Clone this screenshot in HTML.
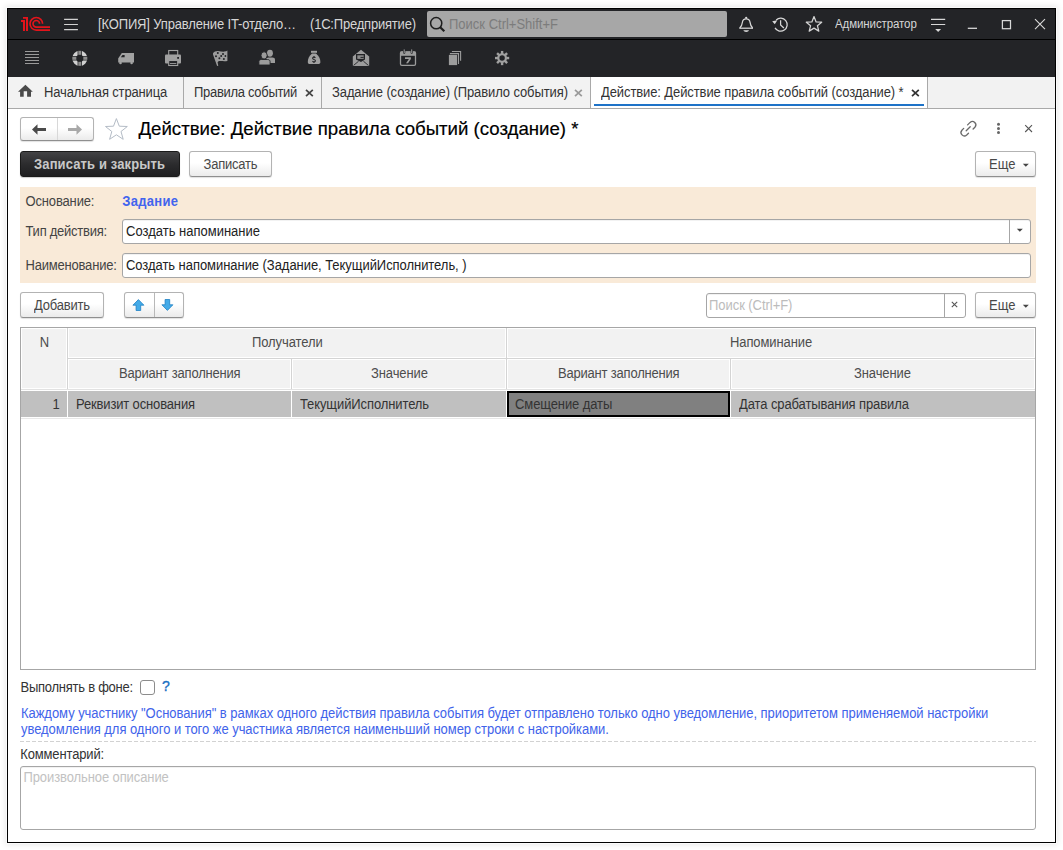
<!DOCTYPE html>
<html><head><meta charset="utf-8">
<style>
*{margin:0;padding:0;box-sizing:border-box}
html,body{width:1063px;height:850px;overflow:hidden;background:#fff;font-family:"Liberation Sans",sans-serif;font-size:13px;color:#333}
.a{position:absolute}
.t{position:absolute;white-space:nowrap;line-height:15px;transform:scaleY(1.07);transform-origin:0 12px}
#win{position:absolute;left:7px;top:8px;width:1049px;height:835px;border:1px solid #000;background:#fff;box-shadow:0 0 0 1px #fafafa,0 0 6px 2px rgba(0,0,0,.09)}
.btn{position:absolute;border:1px solid #b3b3b3;border-bottom-color:#8f8f8f;border-radius:3px;background:linear-gradient(#fff 0%,#fff 45%,#ebebeb 100%);box-shadow:0 1px 1px rgba(0,0,0,.12)}
.hc{background:#f2f2f2;box-shadow:inset 0 0 0 1px #fff}
.inp{position:absolute;border:1px solid #a6a6a6;border-radius:3px;background:#fff;box-shadow:inset 0 1px 0 rgba(0,0,0,.05)}
</style></head><body>
<div id="win"></div>

<!-- title bar -->
<div class="a" style="left:8px;top:9px;width:1047px;height:30px;background:#232427"></div>
<div class="a" style="left:8px;top:39px;width:1047px;height:1px;background:#000"></div>
<!-- toolbar -->
<div class="a" style="left:8px;top:40px;width:1047px;height:37px;background:#232427"></div>

<!-- 1C logo -->
<svg class="a" style="left:18px;top:14px" width="36" height="20" viewBox="18 14 36 20">
  <g fill="#e3141b">
    <rect x="21" y="20" width="4" height="2"/>
    <rect x="23" y="20" width="2" height="11"/>
    <rect x="23" y="17" width="5" height="1.8"/>
    <rect x="26" y="17" width="2" height="14"/>
  </g>
  <g fill="none" stroke="#e3141b" stroke-width="1.65">
    <path d="M42.6,23.8 A6.3,6.3 0 1 0 36.3,30.1 H50"/>
    <path d="M39.6,23.8 A3.3,3.3 0 1 0 36.3,27.1 H50"/>
  </g>
</svg>
<!-- hamburger -->
<svg class="a" style="left:64px;top:18px" width="15" height="13" viewBox="0 0 15 13">
  <g stroke="#d2d2d2" stroke-width="1.2"><path d="M0.1,1.4H13.9M0.1,6.5H13.9M0.1,11.6H13.9"/></g>
</svg>
<div class="t" style="left:98px;top:16.5px;color:#d6d6d6;letter-spacing:-0.15px">[КОПИЯ] Управление IT-отдело…</div>
<div class="t" style="left:310px;top:16.5px;color:#d6d6d6;letter-spacing:-0.2px">(1С:Предприятие)</div>
<!-- search -->
<div class="a" style="left:427px;top:11px;width:300px;height:26px;background:#a7a7a7;border-radius:2px"></div>
<svg class="a" style="left:428px;top:15px" width="20" height="19" viewBox="0 0 20 19">
  <circle cx="8.2" cy="8.2" r="5.6" fill="none" stroke="#1e1e1e" stroke-width="1.5"/>
  <path d="M12.2,12.2 L16.3,16.3" stroke="#1e1e1e" stroke-width="2.2"/>
</svg>
<div class="t" style="left:449px;top:16.5px;color:#7c7c7c">Поиск Ctrl+Shift+F</div>


<!-- toolbar icons -->
<svg class="a" style="left:8px;top:40px" width="520" height="37" viewBox="8 40 520 37">
  <g stroke="#9a9a9a" stroke-width="1"><path d="M25,51.5H39M25,54.5H39M25,57.5H39M25,60.5H39M25,63.5H39"/></g>
  <!-- lifebuoy -->
  <circle cx="79.8" cy="58.3" r="5.6" fill="none" stroke="#d0d0d0" stroke-width="4"/>
  <g fill="#232427"><rect x="77.6" y="50" width="4.4" height="16.6"/><rect x="71.5" y="56.1" width="16.6" height="4.4"/></g>
  <g fill="#8e8e8e"><rect x="78.3" y="50.8" width="3" height="4"/><rect x="78.3" y="61.8" width="3" height="4"/><rect x="72.3" y="56.8" width="4" height="3"/><rect x="83.3" y="56.8" width="4" height="3"/></g>
  <!-- truck -->
  <path d="M121.8,53 H134 V62.6 H118.2 V58.6 Z" fill="#a2a2a2"/>
  <path d="M122.5,55 H124.6 V57.2 H120.8 Z" fill="#232427"/>
  <circle cx="120.5" cy="63" r="1.3" fill="#a2a2a2"/><circle cx="131.6" cy="63" r="1.3" fill="#a2a2a2"/>
  <!-- printer -->
  <rect x="168.7" y="50.5" width="9" height="5" fill="none" stroke="#a0a0a0" stroke-width="1.1"/>
  <rect x="165" y="54.5" width="16" height="9" rx="1" fill="#a0a0a0"/>
  <rect x="168.7" y="60.5" width="9" height="5" fill="#232427" stroke="#a0a0a0" stroke-width="1.1"/>
  <rect x="170" y="63" width="6.3" height="0.9" fill="#a0a0a0"/>
  <rect x="177.2" y="57" width="1.8" height="1.8" fill="#232427"/>
  <!-- flag -->
  <path d="M213,53.2 C214,51.6 216,50.9 218,51 C220.5,51.2 222.5,51.8 224.5,51.6 C225.7,51.5 226.6,51 227.4,50.4 V60.9 C225.5,61.3 223.5,61.2 221.5,61.1 C220,61 219,61.1 218.1,61.5 L217.6,62.3 L218.3,65.7 L217.1,65.9 L213,54.5 Z" fill="#9c9c9c"/>
  <g fill="#232427"><circle cx="217.8" cy="53.1" r="1"/><circle cx="223" cy="53.9" r="1"/><circle cx="216" cy="56.2" r="1"/><circle cx="221.2" cy="55.9" r="1"/><circle cx="225.4" cy="56" r="0.9"/><circle cx="219.4" cy="58.3" r="1"/><circle cx="223.9" cy="59" r="1"/></g>
  <!-- people -->
  <ellipse cx="269.95" cy="53.25" rx="2.95" ry="3.4" fill="#9c9c9c"/>
  <path d="M266,63 V59.6 C266,58.3 267,57.6 268.5,57.6 H272.5 C274,57.6 275,58.3 275,59.6 V63 Z" fill="#9c9c9c"/>
  <ellipse cx="264.1" cy="55.4" rx="3.1" ry="3.6" fill="#9c9c9c" stroke="#232427" stroke-width="0.9"/>
  <path d="M258.9,65 V61.6 C258.9,60.3 260,59.5 261.5,59.5 H267.5 C269,59.5 270.1,60.3 270.1,61.6 V65 Z" fill="#9c9c9c" stroke="#232427" stroke-width="0.9"/>
  <!-- money bag -->
  <rect x="311" y="50.8" width="6" height="2" fill="#a0a0a0"/>
  <path d="M312,53.6 H316 C319,56 320.4,59 320.4,62 C320.4,63.5 319.5,64 318,64 H310 C308.5,64 307.8,63.5 307.8,62 C307.8,59 309,56 312,53.6 Z" fill="#a0a0a0"/>
  <path d="M315.3,57.9 C315,57.3 314.6,57.1 314,57.1 C313.1,57.1 312.6,57.6 312.6,58.3 C312.6,59.1 313.3,59.35 314,59.55 C314.8,59.75 315.4,60.05 315.4,60.85 C315.4,61.5 314.9,61.9 314,61.9 C313.3,61.9 312.8,61.6 312.5,61.1 M314,56 V57.2 M314,61.8 V63" fill="none" stroke="#232427" stroke-width="1.1"/>
  <!-- envelope -->
  <path d="M352.8,56.5 L361,49.7 L369.2,56.5 V65.2 C369.2,65.8 368.8,66.1 368.2,66.1 H353.8 C353.2,66.1 352.8,65.8 352.8,65.2 Z" fill="#9c9c9c"/>
  <path d="M356,54 H365 V59.6 L361,62 L356,59.6 Z" fill="#232427"/>
  <rect x="357.3" y="55.3" width="6.4" height="3.6" fill="#8c8c8c"/>
  <rect x="360.5" y="56.9" width="3.2" height="1" fill="#232427"/>
  <path d="M353.6,65.4 L358.6,61.2 M368.4,65.4 L363.4,61.2" fill="none" stroke="#232427" stroke-width="0.9"/>
  <!-- calendar -->
  <rect x="400.5" y="51.8" width="15" height="13.5" rx="1.3" fill="none" stroke="#9c9c9c" stroke-width="1.3"/>
  <rect x="400.5" y="51.5" width="15" height="4.3" fill="#9c9c9c"/>
  <rect x="403.1" y="49.6" width="2.2" height="4.2" rx="1" fill="#232427"/><rect x="410.6" y="49.6" width="2.2" height="4.2" rx="1" fill="#232427"/>
  <rect x="403.7" y="49.4" width="1" height="3.6" fill="#9c9c9c"/><rect x="411.2" y="49.4" width="1" height="3.6" fill="#9c9c9c"/>
  <path d="M405,57.3 H410.9 V58.9 L408,63.2 H406 L408.9,59 H405 Z" fill="#9c9c9c"/>
  <!-- docs -->
  <path d="M451.9,51.5 H460.6 V60.8" fill="none" stroke="#9c9c9c" stroke-width="1.1"/>
  <path d="M449.9,53.6 H458.5 V63.9" fill="none" stroke="#9c9c9c" stroke-width="1.1"/>
  <rect x="448.9" y="54.9" width="8.2" height="10.2" fill="#9c9c9c"/>
  <!-- gear -->
  <g transform="translate(502.1,58.05)" fill="#a0a0a0">
    <circle r="4.9"/>
    <g id="teeth"><rect x="-1.2" y="-7.1" width="2.4" height="3"/><rect x="-1.2" y="4.1" width="2.4" height="3"/><rect x="-7.1" y="-1.2" width="3" height="2.4"/><rect x="4.1" y="-1.2" width="3" height="2.4"/></g>
    <g transform="rotate(45)"><rect x="-1.2" y="-7.1" width="2.4" height="3"/><rect x="-1.2" y="4.1" width="2.4" height="3"/><rect x="-7.1" y="-1.2" width="3" height="2.4"/><rect x="4.1" y="-1.2" width="3" height="2.4"/></g>
    <circle r="2.7" fill="#232427"/>
  </g>
</svg>


<!-- right title bar icons -->
<svg class="a" style="left:735px;top:12px" width="320" height="26" viewBox="735 12 320 26">
  <g fill="none" stroke="#d8d8d8" stroke-width="1.25">
    <!-- bell -->
    <path d="M739.3,28.2 H753"/>
    <path d="M739.8,28 C741.2,26.5 742.1,25 742.4,22.2 C742.7,19.8 744,18.9 746.2,18.9 C748.4,18.9 749.7,19.8 750,22.2 C750.3,25 751.2,26.5 752.6,28"/>
    <!-- history -->
    <path d="M775,27.85 A6.5,6.5 0 1 0 776.2,20"/>
    <path d="M780.6,20.3 V24.9 L783.9,28"/>
  </g>
  <circle cx="746.2" cy="17.8" r="1.1" fill="#d8d8d8"/>
  <path d="M743.4,30.3 H749 C748.6,31.4 747.6,32 746.2,32 C744.8,32 743.8,31.4 743.4,30.3 Z" fill="#d8d8d8"/>
  <path d="M772.2,21.2 L777.3,20.3 L774.8,24.3 Z" fill="#d8d8d8"/>
  <!-- star -->
  <path d="M814,16.6 L816.1,21.9 L821.7,22.2 L817.4,25.7 L818.8,31.1 L814,28.1 L809.2,31.1 L810.6,25.7 L806.3,22.2 L811.9,21.9 Z" fill="none" stroke="#d4d4d4" stroke-width="1.25" stroke-linejoin="round"/>
  <!-- filter -->
  <g stroke="#d8d8d8" stroke-width="1.2"><path d="M931,19.3H945.2M931,24.5H945.2"/></g>
  <path d="M935.2,29 H941.1 L938.15,31.9 Z" fill="#d8d8d8"/>
  <!-- minimize -->
  <path d="M967.8,28.3 H977" stroke="#d8d8d8" stroke-width="1.3"/>
  <!-- maximize -->
  <rect x="1002.4" y="20.6" width="8.1" height="8.1" fill="none" stroke="#d8d8d8" stroke-width="1.25"/>
  <!-- close -->
  <path d="M1035,19.2 L1045,29.1 M1045,19.2 L1035,29.1" stroke="#d8d8d8" stroke-width="1.15"/>
</svg>
<div class="t" style="left:835px;top:17px;font-size:11.5px;color:#d6d6d6;letter-spacing:-0.1px;transform:scaleY(1.1);transform-origin:0 11.5px">Администратор</div>

<!-- tabs bar -->
<div class="a" style="left:8px;top:77px;width:1047px;height:32px;background:#f2f2f2;border-bottom:1px solid #a9a9a9"></div>
<div class="a" style="left:591px;top:77px;width:336px;height:31px;background:#fff"></div>
<div class="a" style="left:183px;top:77px;width:1px;height:31px;background:#a9a9a9"></div>
<div class="a" style="left:321px;top:77px;width:1px;height:31px;background:#a9a9a9"></div>
<div class="a" style="left:590px;top:77px;width:1px;height:31px;background:#a9a9a9"></div>
<div class="a" style="left:927px;top:77px;width:1px;height:31px;background:#a9a9a9"></div>
<div class="a" style="left:594px;top:104px;width:330px;height:2px;background:#1e73c8"></div>
<svg class="a" style="left:18px;top:84px" width="16" height="14" viewBox="0 0 16 14">
  <path d="M7.4,0.8 L14.8,7.7 H13 V12.8 H9.1 V7.2 H5.7 V12.8 H2.1 V7.7 H0 Z" fill="#4a4a4a"/>
</svg>
<div class="t" style="left:44px;top:85px;color:#333;letter-spacing:-0.15px">Начальная страница</div>
<div class="t" style="left:194px;top:85px;color:#333;letter-spacing:-0.3px">Правила событий</div>
<svg class="a" style="left:305px;top:89px" width="9" height="8" viewBox="0 0 9 8"><path d="M1,0.8 L7.8,7.2 M7.8,0.8 L1,7.2" stroke="#444" stroke-width="1.7"/></svg>
<div class="t" style="left:332px;top:85px;color:#333;letter-spacing:-0.1px">Задание (создание) (Правило события)</div>
<svg class="a" style="left:574px;top:89px" width="9" height="8" viewBox="0 0 9 8"><path d="M1,0.8 L7.8,7.2 M7.8,0.8 L1,7.2" stroke="#9a9a9a" stroke-width="1.7"/></svg>
<div class="t" style="left:601px;top:85px;color:#333;letter-spacing:-0.1px">Действие: Действие правила событий (создание) *</div>
<svg class="a" style="left:911px;top:89px" width="9" height="8" viewBox="0 0 9 8"><path d="M1,0.8 L7.8,7.2 M7.8,0.8 L1,7.2" stroke="#333" stroke-width="1.7"/></svg>

<!-- form header -->
<div class="btn" style="left:20px;top:117px;width:74px;height:24px"></div>
<div class="a" style="left:57px;top:118px;width:1px;height:22px;background:#d8d8d8"></div>
<svg class="a" style="left:20px;top:117px" width="74" height="24" viewBox="20 117 74 24">
  <path d="M32,129.5 L37.5,124.3 V127.9 H46 V131.1 H37.5 V134.7 Z" fill="#4a4a4a"/>
  <path d="M82,129.5 L76.5,124.3 V127.9 H68 V131.1 H76.5 V134.7 Z" fill="#a8a8a8"/>
</svg>
<svg class="a" style="left:104px;top:117px" width="25" height="24" viewBox="104 117 25 24">
  <path d="M116.4,118.6 L119.3,126.2 L127.3,126.5 L121,131.5 L123.2,139.3 L116.4,134.8 L109.6,139.3 L111.8,131.5 L105.5,126.5 L113.5,126.2 Z" fill="none" stroke="#b4bcc6" stroke-width="1" stroke-linejoin="miter"/>
</svg>
<div class="t" style="left:138.5px;top:119px;font-size:18.67px;line-height:20px;transform:none;color:#000;letter-spacing:-0.02px;-webkit-text-stroke:0.18px #000">Действие: Действие правила событий (создание) *</div>
<svg class="a" style="left:955px;top:115px" width="85" height="26" viewBox="955 115 85 26">
  <g fill="none" stroke="#6a6a6a" stroke-width="1.3" stroke-linecap="round">
    <path d="M967.6,124.9 L970.1,122.4 A3.4,3.4 0 0 1 974.9,127.2 L973.1,129"/>
    <path d="M963.7,128.4 L961.9,130.2 A3.4,3.4 0 0 0 966.7,135 L968.5,133.2"/>
    <path d="M966.2,130.8 L970.2,126.8"/>
  </g>
  <circle cx="998.5" cy="124.3" r="1.5" fill="#666"/><circle cx="998.5" cy="128.4" r="1.5" fill="#666"/><circle cx="998.5" cy="132.5" r="1.5" fill="#666"/>
  <path d="M1025.2,125.2 L1032,132 M1032,125.2 L1025.2,132" stroke="#555" stroke-width="1.1"/>
</svg>

<!-- command bar -->
<div class="a" style="left:20px;top:151px;width:160px;height:26px;border-radius:3px;border:1px solid #1a1a1a;background:linear-gradient(#434345,#2c2c2e 50%,#1e1e20);box-shadow:0 1px 1px rgba(0,0,0,.2)"></div>
<div class="t" style="left:34px;top:157px;color:#c8c8c8;font-weight:bold;letter-spacing:0.13px">Записать и закрыть</div>
<div class="btn" style="left:189px;top:151px;width:83px;height:26px"></div>
<div class="t" style="left:203.5px;top:157px;color:#484848;letter-spacing:-0.22px">Записать</div>
<div class="btn" style="left:975px;top:151px;width:61px;height:26px"></div>
<div class="t" style="left:989px;top:157px;color:#484848">Еще</div>
<svg class="a" style="left:1022px;top:163px" width="8" height="5" viewBox="0 0 8 5"><path d="M0.8,0.8 H6.8 L3.8,3.8 Z" fill="#444"/></svg>

<!-- peach group -->
<div class="a" style="left:20px;top:187px;width:1016px;height:96px;background:#f9ead8"></div>
<div class="t" style="left:25.5px;top:194px;color:#444;letter-spacing:-0.15px">Основание:</div>
<div class="t" style="left:122.3px;top:194px;color:#4264ee;font-weight:bold;letter-spacing:0.3px">Задание</div>
<div class="t" style="left:25.5px;top:223.5px;color:#444;letter-spacing:-0.25px">Тип действия:</div>
<div class="inp" style="left:122px;top:219px;width:909px;height:25px"></div>
<div class="a" style="left:1009px;top:220px;width:1px;height:23px;background:#a6a6a6"></div>
<svg class="a" style="left:1016px;top:228.4px" width="8" height="5" viewBox="0 0 8 5"><path d="M0.8,0.8 H6.8 L3.8,3.8 Z" fill="#444"/></svg>
<div class="t" style="left:126px;top:223.5px;color:#222">Создать напоминание</div>
<div class="t" style="left:25.5px;top:257.5px;color:#444;letter-spacing:-0.2px">Наименование:</div>
<div class="inp" style="left:122px;top:253px;width:909px;height:25px"></div>
<div class="t" style="left:126px;top:257.5px;color:#222;letter-spacing:-0.05px">Создать напоминание (Задание, ТекущийИсполнитель, )</div>

<!-- table command bar -->
<div class="btn" style="left:20px;top:292px;width:84px;height:26px"></div>
<div class="t" style="left:34px;top:298px;color:#484848;letter-spacing:-0.2px">Добавить</div>
<div class="btn" style="left:124px;top:292px;width:60px;height:26px"></div>
<div class="a" style="left:154px;top:293px;width:1px;height:24px;background:#b8b8b8"></div>
<svg class="a" style="left:124px;top:292px" width="60" height="26" viewBox="124 292 60 26">
  <path d="M138.4,299.6 L143.9,305.2 H140.7 V310.5 H136.1 V305.2 H132.9 Z" fill="#44abe8" stroke="#1e80c4" stroke-width="0.8"/>
  <path d="M167.4,310.4 L172.9,304.8 H169.7 V299.5 H165.1 V304.8 H161.9 Z" fill="#44abe8" stroke="#1e80c4" stroke-width="0.8"/>
</svg>
<div class="inp" style="left:706px;top:293px;width:260px;height:25px"></div>
<div class="a" style="left:944px;top:294px;width:1px;height:23px;background:#a6a6a6"></div>
<svg class="a" style="left:950px;top:300px" width="10" height="10" viewBox="0 0 10 10"><path d="M1.8,1.8 L7.2,7.2 M7.2,1.8 L1.8,7.2" stroke="#555" stroke-width="1.1"/></svg>
<div class="t" style="left:709px;top:298px;color:#bcbcbc;letter-spacing:-0.05px">Поиск (Ctrl+F)</div>
<div class="btn" style="left:975px;top:292px;width:61px;height:26px"></div>
<div class="t" style="left:989px;top:298px;color:#484848">Еще</div>
<svg class="a" style="left:1022px;top:304px" width="8" height="5" viewBox="0 0 8 5"><path d="M0.8,0.8 H6.8 L3.8,3.8 Z" fill="#444"/></svg>


<!-- table -->
<div class="a" style="left:20px;top:327px;width:1016px;height:343px;border:1px solid #a6a6a6;background:#fff"></div>
<!-- header cells: each cell bg f2f2f2 with white inner edge; separators d0d0d0 -->
<div class="a" style="left:21px;top:328px;width:1014px;height:62px;background:#d4d4d4"></div>
<div class="a hc" style="left:21px;top:328px;width:46px;height:61px"></div>
<div class="a hc" style="left:68px;top:328px;width:438px;height:30px"></div>
<div class="a hc" style="left:507px;top:328px;width:528px;height:30px"></div>
<div class="a hc" style="left:68px;top:359px;width:223px;height:30px"></div>
<div class="a hc" style="left:292px;top:359px;width:214px;height:30px"></div>
<div class="a hc" style="left:507px;top:359px;width:223px;height:30px"></div>
<div class="a hc" style="left:731px;top:359px;width:304px;height:30px"></div>
<div class="a" style="left:21px;top:389px;width:1014px;height:1px;background:#e2e2e2"></div>
<div class="a" style="left:21px;top:390px;width:1014px;height:1px;background:#fff"></div>
<div class="t" style="left:39.8px;top:335px;color:#4d4d4d">N</div>
<div class="t" style="left:252px;top:335px;color:#4d4d4d;letter-spacing:-0.1px">Получатели</div>
<div class="t" style="left:730px;top:335px;color:#4d4d4d;letter-spacing:-0.1px">Напоминание</div>
<div class="t" style="left:119px;top:366px;color:#4d4d4d;letter-spacing:-0.2px">Вариант заполнения</div>
<div class="t" style="left:371px;top:366px;color:#4d4d4d;letter-spacing:-0.1px">Значение</div>
<div class="t" style="left:558px;top:366px;color:#4d4d4d;letter-spacing:-0.2px">Вариант заполнения</div>
<div class="t" style="left:854px;top:366px;color:#4d4d4d;letter-spacing:-0.1px">Значение</div>
<!-- data row -->
<div class="a" style="left:21px;top:391px;width:1014px;height:26px;background:#c0c0c0"></div>
<div class="a" style="left:67px;top:391px;width:1px;height:26px;background:#fff"></div>
<div class="a" style="left:291px;top:391px;width:1px;height:26px;background:#fff"></div>
<div class="a" style="left:506px;top:391px;width:1px;height:26px;background:#fff"></div>
<div class="a" style="left:730px;top:391px;width:1px;height:26px;background:#fff"></div>
<div class="a" style="left:21px;top:417px;width:1014px;height:1px;background:#fff"></div>
<div class="a" style="left:21px;top:418px;width:1014px;height:1px;background:#e8e8e8"></div>
<div class="a" style="left:507px;top:391px;width:223px;height:26px;background:#808080;border:2px solid #000"></div>
<div class="t" style="left:52.5px;top:397px;color:#333">1</div>
<div class="t" style="left:76px;top:397px;color:#333;letter-spacing:-0.15px">Реквизит основания</div>
<div class="t" style="left:300px;top:397px;color:#333;letter-spacing:-0.1px">ТекущийИсполнитель</div>
<div class="t" style="left:515px;top:397px;color:#333;letter-spacing:-0.1px">Смещение даты</div>
<div class="t" style="left:739px;top:397px;color:#333;letter-spacing:-0.1px">Дата срабатывания правила</div>

<!-- bottom -->
<div class="t" style="left:20.5px;top:680px;color:#333;letter-spacing:-0.25px">Выполнять в фоне:</div>
<div class="a" style="left:140px;top:680px;width:15px;height:15px;border:1px solid #8c8c8c;border-radius:3px;background:#fff"></div>
<div class="t" style="left:162px;top:679px;font-size:14px;color:#1a6fc2;-webkit-text-stroke:0.35px #1a6fc2">?</div>
<div class="t" style="left:21px;top:706px;color:#4163ea;letter-spacing:-0.045px">Каждому участнику "Основания" в рамках одного действия правила события будет отправлено только одно уведомление, приоритетом применяемой настройки</div>
<div class="t" style="left:21px;top:722px;color:#4163ea;letter-spacing:-0.045px">уведомления для одного и того же участника является наименьший номер строки с настройками.</div>
<div class="a" style="left:20px;top:741px;width:1016px;height:1px;background:repeating-linear-gradient(90deg,#d2d2d2 0,#d2d2d2 4px,transparent 4px,transparent 6px)"></div>
<div class="t" style="left:20.3px;top:747px;color:#333;letter-spacing:-0.15px">Комментарий:</div>
<div class="inp" style="left:20px;top:766px;width:1016px;height:64px"></div>
<div class="t" style="left:23.5px;top:770px;color:#c2c2c2;letter-spacing:-0.1px">Произвольное описание</div>

<!-- content placeholder -->
</body></html>
